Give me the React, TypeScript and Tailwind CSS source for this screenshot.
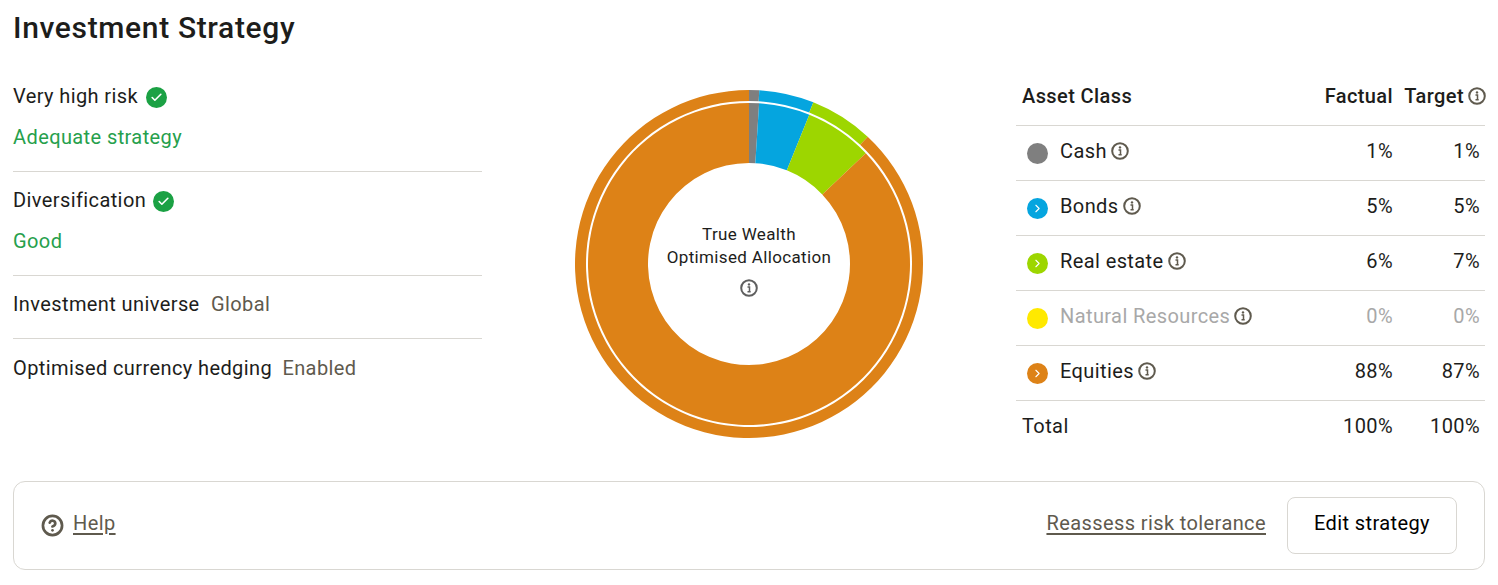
import { Check, ChevronRight, CircleHelp } from 'lucide-react'

const ASSETS = [
  { name: 'Cash', factual: '1%', target: '1%', dot: 'bg-[#7f7f7f]', arrow: false, faded: false },
  { name: 'Bonds', factual: '5%', target: '5%', dot: 'bg-[#05a5df]', arrow: true, faded: false },
  { name: 'Real estate', factual: '6%', target: '7%', dot: 'bg-[#9dd600]', arrow: true, faded: false },
  { name: 'Natural Resources', factual: '0%', target: '0%', dot: 'bg-[#ffe900]', arrow: false, faded: true },
  { name: 'Equities', factual: '88%', target: '87%', dot: 'bg-[#dd8217]', arrow: true, faded: false },
]

// angles in degrees, clockwise from 12 o'clock
const OUTER = [
  { from: 0, to: 3.4, color: '#7f7f7f' },
  { from: 3.4, to: 21.7, color: '#05a5df' },
  { from: 21.7, to: 43, color: '#9dd600' },
  { from: 43, to: 360, color: '#dd8217' },
]
const INNER = [
  { from: 0, to: 3.6, color: '#7f7f7f' },
  { from: 3.6, to: 22, color: '#05a5df' },
  { from: 22, to: 46.5, color: '#9dd600' },
  { from: 46.5, to: 360, color: '#dd8217' },
]

function arc(from: number, to: number, r0: number, r1: number) {
  const c = 174
  const pt = (r: number, a: number) => {
    const rad = (a * Math.PI) / 180
    return `${c + r * Math.sin(rad)} ${c - r * Math.cos(rad)}`
  }
  const large = to - from > 180 ? 1 : 0
  return `M${pt(r1, from)} A${r1} ${r1} 0 ${large} 1 ${pt(r1, to)} L${pt(r0, to)} A${r0} ${r0} 0 ${large} 0 ${pt(r0, from)} Z`
}

function InfoIcon({ className = 'text-[#5f5a4e]' }: { className?: string }) {
  return (
    <svg width="18" height="18" viewBox="0 0 18 18" fill="none" className={`shrink-0 ${className}`}>
      <circle cx="9" cy="9" r="7.8" stroke="currentColor" strokeWidth="2" />
      <circle cx="9" cy="5.4" r="1.2" fill="currentColor" />
      <path d="M7.5 8h2v4.6M7.5 12.8h3.2" stroke="currentColor" strokeWidth="1.5" />
    </svg>
  )
}

function CheckBadge() {
  return (
    <span className="w-[21px] h-[21px] mt-[2px] rounded-full bg-[#1ba144] flex items-center justify-center shrink-0">
      <Check className="w-[13px] h-[13px] text-white" strokeWidth={3} />
    </span>
  )
}

export default function App() {
  return (
    <div className="w-[1498px] h-[585px] bg-white text-[20px] leading-[28px] tracking-[0.4px] text-[#1d1d1b] px-[13px] pt-[10px] overflow-hidden font-['Roboto',sans-serif]">
      <h1 className="text-[30px] leading-[36px] font-medium tracking-[0.65px]">Investment Strategy</h1>

      <div className="flex items-start h-[399px] mt-[36px]">
        {/* Left summary */}
        <div className="w-[469px] shrink-0">
          <div className="pb-[20px] border-b border-[#d9d7d2]">
            <div className="flex items-center gap-[8px]">Very high risk <CheckBadge /></div>
            <div className="mt-[13px] text-[#26a04c]">Adequate strategy</div>
          </div>
          <div className="pt-[14px] pb-[20px] border-b border-[#d9d7d2]">
            <div className="flex items-center gap-[7px]">Diversification <CheckBadge /></div>
            <div className="mt-[13px] text-[#26a04c]">Good</div>
          </div>
          <div className="pt-[14px] pb-[20px] border-b border-[#d9d7d2]">
            Investment universe <span className="ml-[6px] text-[#5f5a4e]">Global</span>
          </div>
          <div className="pt-[15px]">
            Optimised currency hedging <span className="ml-[5px] text-[#5f5a4e]">Enabled</span>
          </div>
        </div>

        {/* Donut */}
        <div className="flex-1 flex justify-center pt-[8px]">
          <div className="relative w-[348px] h-[348px]">
            <svg width="348" height="348" viewBox="0 0 348 348">
              {OUTER.map(s => <path key={s.from} d={arc(s.from, s.to, 163, 174)} fill={s.color} />)}
              {INNER.map(s => <path key={s.from} d={arc(s.from, s.to, 101, 161)} fill={s.color} />)}
            </svg>
            <div className="absolute inset-0 flex flex-col items-center pt-[133px] text-[17px] leading-[23px] tracking-[0.35px]">
              <span>True Wealth</span>
              <span>Optimised Allocation</span>
              <InfoIcon className="mt-[10px] text-[#5f5f5f]" />
            </div>
          </div>
        </div>

        {/* Asset table */}
        <div className="w-[469px] shrink-0">
          <div className="h-[44px] flex items-start pl-[6px] pr-[5px] font-medium border-b border-[#d9d7d2]">
            <span className="flex-1">Asset Class</span>
            <span className="w-[87px] text-right">Factual</span>
            <span className="w-[93px] shrink-0 -mr-[6px] flex items-center justify-end gap-[4px]">Target <InfoIcon /></span>
          </div>
          {ASSETS.map(a => (
            <div key={a.name} className="h-[55px] flex items-center pl-[11px] pr-[5px] border-b border-[#d9d7d2]">
              <span className={`w-[21px] h-[21px] rounded-full flex items-center justify-center shrink-0 ${a.dot}`}>
                {a.arrow && <ChevronRight className="w-[13px] h-[13px] text-white" strokeWidth={2} />}
              </span>
              <span className="flex-1 flex items-center gap-[4px] ml-[12px] -mt-[4px]">
                <span className={a.faded ? 'text-[#a8a8a8]' : ''}>{a.name}</span>
                <InfoIcon />
              </span>
              <span className={`w-[87px] text-right -mt-[4px] ${a.faded ? 'text-[#a8a8a8]' : ''}`}>{a.factual}</span>
              <span className={`w-[87px] text-right -mt-[4px] ${a.faded ? 'text-[#a8a8a8]' : ''}`}>{a.target}</span>
            </div>
          ))}
          <div className="h-[50px] flex items-center pl-[6px] pr-[5px]">
            <span className="flex-1">Total</span>
            <span className="w-[87px] text-right">100%</span>
            <span className="w-[87px] text-right">100%</span>
          </div>
        </div>
      </div>

      {/* Footer actions */}
      <div className="w-[1472px] h-[89px] border border-[#d9d7d2] rounded-[12px] flex items-center pl-[27px] pr-[27px]">
        <CircleHelp className="w-[23px] h-[23px] text-[#5f5a4e]" strokeWidth={2.8} />
        <a className="ml-[9px] -mt-[5px] underline decoration-2 underline-offset-[3px] text-[#5f5a4e]">Help</a>
        <a className="ml-auto -mt-[5px] underline decoration-2 underline-offset-[3px] text-[#5f5a4e]">Reassess risk tolerance</a>
        <button className="ml-[21px] w-[170px] h-[57px] pb-[5px] border border-[#d9d7d2] rounded-[8px] text-black">Edit strategy</button>
      </div>
    </div>
  )
}
